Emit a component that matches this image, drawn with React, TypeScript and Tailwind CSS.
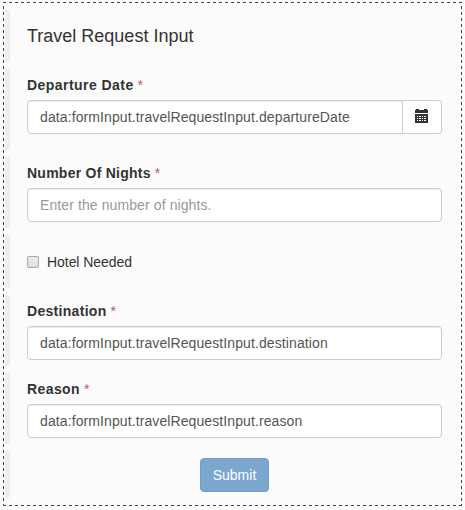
import type { ReactNode } from "react";

function Section({ className, children }: { className: string; children: ReactNode }) {
  return (
    <section
      className={`mb-[5px] w-full border-y-2 border-l-[5px] border-y-transparent border-l-[#eeeeee] pl-[17px] pr-[19px] ${className}`}
    >
      {children}
    </section>
  );
}

function Label({ text, spacing }: { text: string; spacing: string }) {
  return (
    <label className="mb-[5px] block h-5 font-bold leading-5 text-[#333333]">
      <span className={spacing}>{text}</span>{" "}
      <span className="font-normal text-[#b0605e]">*</span>
    </label>
  );
}

const inputClass =
  "block h-[34px] w-full min-w-0 rounded border border-[#cccccc] bg-white px-3 py-[6px] leading-5 tracking-[0.1px] text-[#555555] shadow-[inset_0_1px_1px_rgba(0,0,0,0.075)] outline-none placeholder:text-[#999999]";

function CalendarIcon() {
  return (
    <svg
      className="mb-[2px]"
      width="14"
      height="14"
      viewBox="0 0 14 14"
      fill="#333333"
      shapeRendering="crispEdges"
    >
      <path d="M1 0h3v1h5V0h3v1h1v3H0V1h1z" />
      <path
        fillRule="evenodd"
        d="M0 5h13v9H0zM2 7v1h1V7zM4 7v1h2V7zM7 7v1h1V7zM9 7v1h2V7zM2 9v1h1V9zM4 9v1h2V9zM7 9v1h1V9zM9 9v1h2V9zM2 11v1h1v-1zM4 11v1h2v-1zM7 11v1h1v-1zM9 11v1h2v-1z"
      />
    </svg>
  );
}

const dashX = "h-px w-full bg-[repeating-linear-gradient(90deg,#444450_0_3px,transparent_3px_6px)]";
const dashY =
  "w-px shrink-0 bg-[repeating-linear-gradient(180deg,transparent_0_3px,#444450_3px_6px)]";

export default function App() {
  return (
    <main className="h-[510px] w-[465px] bg-[#fbfbfb] pl-[3px] pr-[3px] pt-[2px] font-['Liberation_Sans',Arial,sans-serif] text-[14px] text-[#333333]">
      <div className={dashX} />
      <form className="flex h-[502px]" onSubmit={(e) => e.preventDefault()}>
        <div className={dashY} />
        <div className="min-w-0 flex-1 pl-px pt-[6px]">
          <Section className="h-[54px] pt-[15px]">
            <h1 className="text-[18px] leading-5">Travel Request Input</h1>
          </Section>
          <Section className="h-[83px] pt-[5px]">
            <Label text="Departure Date" spacing="tracking-[0.45px]" />
            <div className="flex">
              <input
                aria-label="Departure Date"
                className={`${inputClass} rounded-r-none`}
                defaultValue="data:formInput.travelRequestInput.departureDate"
              />
              <button
                type="button"
                aria-label="Pick a date"
                className="flex h-[34px] w-[39px] shrink-0 items-center rounded-r border border-l-0 border-[#cccccc] bg-white pl-3"
              >
                <CalendarIcon />
              </button>
            </div>
          </Section>
          <Section className="h-[73px] pt-[5px]">
            <Label text="Number Of Nights" spacing="tracking-[0.25px]" />
            <input
              aria-label="Number Of Nights"
              className={inputClass}
              placeholder="Enter the number of nights."
            />
          </Section>
          <Section className="h-[55px] pt-4">
            <label className="flex h-5 items-center leading-5 tracking-[-0.05px]">
              <input
                type="checkbox"
                className="mr-2 size-3 appearance-none rounded-[2px] border border-[#a9a9a9] bg-linear-to-b from-[#eeeeee] to-[#dcdcdc]"
              />
              Hotel Needed
            </label>
          </Section>
          <Section className="h-[73px] pt-[5px]">
            <Label text="Destination" spacing="tracking-[0.3px]" />
            <input
              aria-label="Destination"
              className={inputClass}
              defaultValue="data:formInput.travelRequestInput.destination"
            />
          </Section>
          <Section className="h-[73px] pt-[5px]">
            <Label text="Reason" spacing="tracking-[0.4px]" />
            <input
              aria-label="Reason"
              className={inputClass}
              defaultValue="data:formInput.travelRequestInput.reason"
            />
          </Section>
          <Section className="h-[49px] pt-[6px]">
            <button
              type="submit"
              className="mx-auto block h-[34px] w-[69px] rounded border border-[#729fc9] bg-[#7ba7cf] leading-5 text-white"
            >
              Submit
            </button>
          </Section>
        </div>
        <div className={dashY} />
      </form>
      <div className={dashX} />
    </main>
  );
}
